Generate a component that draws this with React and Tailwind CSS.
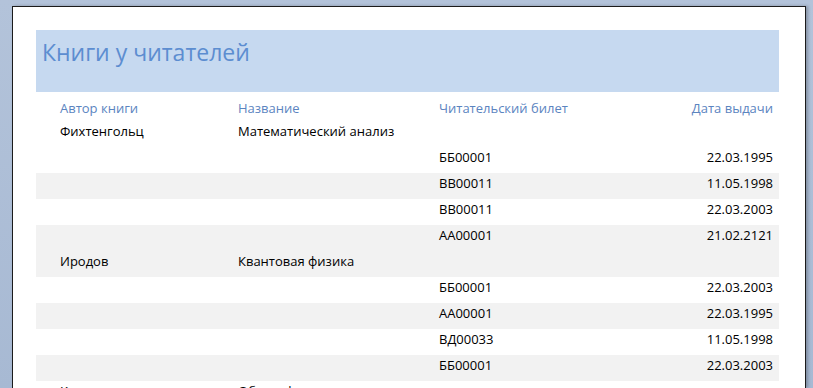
import React from 'react';

const groups = [
  {
    author: 'Фихтенгольц',
    title: 'Математический анализ',
    shaded: false,
    loans: [
      ['ББ00001', '22.03.1995'],
      ['ВВ00011', '11.05.1998'],
      ['ВВ00011', '22.03.2003'],
      ['АА00001', '21.02.2121'],
    ],
  },
  {
    author: 'Иродов',
    title: 'Квантовая физика',
    shaded: true,
    loans: [
      ['ББ00001', '22.03.2003'],
      ['АА00001', '22.03.1995'],
      ['ВД00033', '11.05.1998'],
      ['ББ00001', '22.03.2003'],
    ],
  },
  {
    author: 'Кузнецов',
    title: 'Общая физика',
    shaded: false,
    loans: [],
  },
];

const Row = ({ shaded, cells, head }) => (
  <div
    className={`flex items-center pl-[24px] pr-[6px] ${head ? 'h-[29px] pt-[4px] text-[#5b84bf]' : 'h-[26px] pb-[4px] text-black'} ${shaded ? 'bg-[#f2f2f2]' : ''}`}
  >
    <div className="w-[178px] shrink-0 whitespace-nowrap">{cells[0]}</div>
    <div className="w-[201px] shrink-0 whitespace-nowrap">{cells[1]}</div>
    <div className="flex-1 whitespace-nowrap">{cells[2]}</div>
    <div className="text-right whitespace-nowrap">{cells[3]}</div>
  </div>
);

export default function App() {
  return (
    <div
      className="h-[388px] w-[813px] overflow-hidden bg-gradient-to-b from-[#b3c3da] to-[#a7b9d3] pl-[12px] pr-[7px] pt-[6px]"
      style={{ fontFamily: '"Open Sans", "Noto Sans", sans-serif' }}
    >
      <div className="h-full border-l border-r border-t border-[#1b1b1b] bg-white pl-[23px] pr-[26px] pt-[23px] shadow-[2px_0_3px_rgba(0,0,0,0.25)]">
        <div className="h-[62px] bg-[#c6d9f0] pl-[6px] pt-[6px]">
          <h1 className="text-[23px] leading-[32px] text-[#5c8dd0]">Книги у читателей</h1>
        </div>
        <div className="text-[13px]">
          <Row head cells={['Автор книги', 'Название', 'Читательский билет', 'Дата выдачи']} />
          {groups.map((g) => {
            let i = 0;
            return (
              <React.Fragment key={g.author}>
                <Row shaded={g.shaded} cells={[g.author, g.title, '', '']} />
                {g.loans.map(([card, date]) => {
                  i += 1;
                  return <Row key={card + date + i} shaded={i % 2 === 0} cells={['', '', card, date]} />;
                })}
              </React.Fragment>
            );
          })}
        </div>
      </div>
    </div>
  );
}
